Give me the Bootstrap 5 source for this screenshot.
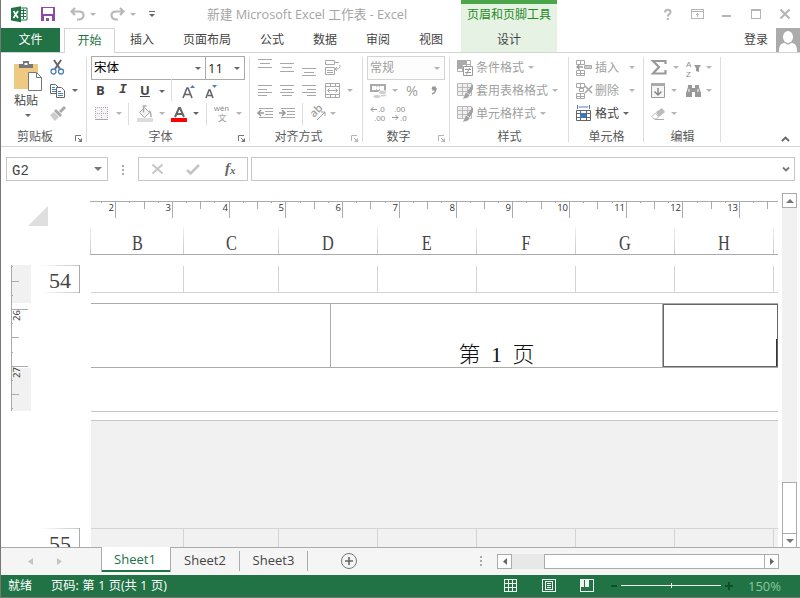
<!DOCTYPE html>
<html lang="zh-CN">
<head>
<meta charset="utf-8">
<title>新建 Microsoft Excel 工作表 - Excel</title>
<link rel="stylesheet" href="https://cdn.jsdelivr.net/npm/bootstrap@5.3.0/dist/css/bootstrap.min.css">
<style>
body{font-family:"Open Sans","Noto Sans CJK SC",sans-serif;font-size:12px;line-height:16px;color:#444;overflow:hidden;background:#fff}
svg{display:block;flex:none;overflow:visible;fill:none}
.crisp{shape-rendering:crispEdges}
.win{width:800px;height:598px;border-left:1px solid #777;border-bottom:1px solid #777}
/* header */
.top{height:53px}
.top-left{width:460px}.top-ctx{width:96px;height:52px;background:#e6f2e4;border-top:4px solid #4ba64b}
.top-right{width:243px}
.bar1{height:28px}.bar2{height:25px;border-bottom:1px solid #d4d4d4}
.top-ctx-wrap{border-bottom:1px solid #d4d4d4;height:53px}
.qat{display:grid;grid-template-columns:30px 29px 20px 20px 20px 19px 58px auto;padding-left:10px;align-items:center}
.doc{font-size:12.7px;color:#a5a5a5;white-space:nowrap}
.ctx-title{color:#1e8c1e;height:22px;line-height:22px}
.ctx-tab{height:26px;line-height:27px}
.tab-file{width:59px;height:24px;background:#217346;color:#fff;line-height:24px;margin-right:4px}
.tab-on{width:51px;height:25px;background:#fff;border:1px solid #d4d4d4;border-bottom:0;color:#217346;line-height:23px}
.tabs2{display:grid;grid-template-columns:53px 77px 53px 53px 53px 30px;padding-left:15px;line-height:24px}
.wbtns{display:grid;grid-template-columns:27px 31px 29px 29px 12px;padding-left:107px;align-items:center}
/* ribbon */
.ribbon{height:94px;border-bottom:1px solid #d4d4d4;padding-top:3px}
.grp{position:relative;height:88px;flex:none}
.grp::after{content:"";position:absolute;right:0;top:1px;height:85px;border-right:1px solid #dcdcdc}
.rr{display:grid;height:23px;align-items:center;white-space:nowrap}
.lab{height:22px;line-height:24px;text-align:center;color:#5a5a5a}
.launch{position:absolute;right:5px;bottom:2px;color:#777}
.dim{color:#a0a0a0}
.launch.dim{color:#b5b5b5}
.vs{width:1px;height:22px;background:#dcdcdc}
.box{border:1px solid #ababab;height:24px;line-height:22px;background:#fff;padding:0 4px 0 2px}
.box-dim{border-color:#d4d4d4;background:#fdfdfd;color:#a0a0a0}
.g-clip{width:86px}.g-font{width:163px}.g-align{width:113px}.g-num{width:87px}.g-sty{width:119px}.g-cell{width:75px}.g-edit{width:77px}
.g-clip .lab{padding-right:18px}
.paste{width:49px;padding:5px 0 0 13px;height:66px}
.paste-t{line-height:15px;padding-top:2px}
.paste svg.cr{margin:6px 0 0 11px}
.c2{grid-template-columns:22px 6px}
.f1{width:115px;font-size:12.500px;color:#000}.f2{width:40px;margin-left:-1px;font-size:13px;color:#222}
.f-b{grid-template-columns:23px 21px 19px 12px 11px 23px 12px;padding:0 0 2px 9px;font-size:13px}
.f-b svg{margin-top:2px}
.f-c{grid-template-columns:21px 12px 9px 22px 12px 22px 13px 8px 22px 6px;padding-left:8px}
.a-a{grid-template-columns:22px 22px 23px 22px 6px;padding-left:8px}
.a-c{grid-template-columns:22px 23px 8px 20px 6px;padding-left:7px}
.n-a{width:78px;margin-left:4px}
.n-b{grid-template-columns:22px 14px 25px 6px;padding-left:7px;font-size:14.500px}
.n-c{grid-template-columns:21px 16px;padding-left:8px}
.s-r{grid-template-columns:19px auto 6px;padding-left:7px;justify-content:start}
.s-r .cr{margin-left:4px}
.g-cell .wide .cr{margin-left:10px}
.e-a{grid-template-columns:22px 13px 20px 6px;padding-left:7px}
.e-b{grid-template-columns:20px 15px 20px 6px;padding-left:7px}
.ribbon-end{width:79px;padding:80px 0 0 60px}
.tiny{font:8px "Liberation Sans",sans-serif;fill:#8c8c8c}
/* formula bar */
.fbar{height:43px;padding:10px 0 0 5px}
.fb{height:24px;border:1px solid #c6c6c6}
.namebox{width:102px;padding:0 5px 0 5px;font-family:"Liberation Mono",monospace;font-size:14px}
.fxbox{width:110px;display:grid;grid-template-columns:34px 37px 14px;padding-left:13px;align-items:center;margin-right:3px}
.inbox{width:544px;padding-right:4px}
.dots{margin:0 14px 0 14px}
/* sheet */
.area{height:357px}
.gutter{width:89px}.gut-top{height:75px;padding:16px 0 0 27px}
.gut-mid{height:263px}
.vruler{margin-left:10px}
.rh{width:40px;height:28px;border-right:1px solid #ababab;background:linear-gradient(90deg,#fff,#c6c6c6) top/100% 1px no-repeat,linear-gradient(90deg,#fff,#c6c6c6) bottom/100% 1px no-repeat;font:22px/31px "Liberation Serif",serif;text-align:right;padding-right:8px;margin-left:6px;flex:none}
.rh.cut{margin-left:39px;height:19px;background-size:100% 1px,0 0;overflow:hidden}
.grid-w{width:688px;padding-top:11px}
.rlr{height:26px}
.rlr text,.vruler text{font:9.500px "Open Sans",sans-serif;fill:#333}
.cols{height:28px;border-bottom:1px solid #ababab}
.colh{flex:none;font:22px/32px "Liberation Serif",serif;text-align:center;border-left:1px solid;border-image:linear-gradient(#f2f2f2,#c6c6c6) 1}
.colh span{display:inline-block;transform:scaleX(.74)}
.cells{height:27px;margin:11px 0 0 1px;border-bottom:1px solid #d4d4d4}
.cells i{flex:none;border-right:1px solid #d4d4d4}
.w93{width:93px}.w95{width:95px}.w99{width:99px}.w4{width:4px}
.foot{height:65px;margin:10px 0 0 1px;border:1px solid #ababab;border-width:1px 0}
.foot-l{width:240px;border-right:1px solid #ababab}
.foot-c{width:332px;border-right:1px solid #ababab;font:300 22px/25px "Liberation Serif","Noto Sans CJK SC",serif;color:#111;white-space:pre;word-spacing:5px}
.foot-r{width:115px;border:1px solid #666}
.foot-r b{width:1px;height:27px;background:#333}
.gap1{height:44px;border-bottom:1px solid #c6c6c6;margin-left:1px}
.nextp{height:127px;margin:8px 0 0 1px;border-top:1px solid #c6c6c6;background:#f1f1f1}
.nextp .cells{border-bottom:0;border-top:1px solid #d4d4d4;height:19px;margin:107px 0 0}
.vsb{width:15px;margin:3px 0 0 4px;background:#f1f1f1;height:355px}
.sb{width:15px;height:15px;border:1px solid #ababab;background:#fff;flex:none}
.vthumb{height:52px;margin-bottom:-1px;border:1px solid #ababab;background:#fff}
/* bottom */
.strip{height:28px;background:#f5f5f5;border-top:1px solid #ababab;font-size:13px}
.nav-arr{width:100px;height:27px;padding:0 39px 0 27px}
.st{height:20px;line-height:18px;text-align:center;margin-top:3px;border-right:1px solid #ababab;width:69px}
.st + .st + .st{width:68px}
.st-on{width:70px;height:25px;margin:-1px 0 0;background:#fff;border:1px solid #ababab;border-width:0 1px;box-shadow:inset 0 -2px #217346;color:#217346;line-height:25px;padding-right:2px}
.plus{margin:5px 0 0 33px}
.hdots{margin:8px 15px 0 auto}
.hsb{width:282px;height:15px;margin:6px 21px 0 0;background:#e8e8e8}
.hthumb{width:221px;height:15px;border:1px solid #ababab;background:#fff;margin-left:auto;margin-right:-1px}
.status{height:22px;background:#217346;color:#fff;line-height:22px;padding-left:7px}
.pages{margin-left:19px;font-size:12.300px;word-spacing:.3px}
.stat-ic{display:grid;grid-template-columns:38px 38px 31px 137px auto;padding-top:4px;height:22px;margin-left:auto;width:296px;line-height:14px}
.zoomv{color:#8cc79c;font-size:13px}
</style>
<script src="https://cdn.jsdelivr.net/npm/bootstrap@5.3.0/dist/js/bootstrap.bundle.min.js"></script>
</head>
<body>
<svg width="0" height="0" class="position-absolute">
<symbol id="cr" viewBox="0 0 6 3"><path d="M0 0h6L3 3z" fill="#666"/></symbol>
<symbol id="cd" viewBox="0 0 6 3"><path d="M0 0h6L3 3z" fill="#b5b5b5"/></symbol>
<symbol id="la" viewBox="0 0 7 7"><path d="M.5 6V.5H6M3 3l3 3" stroke="currentColor"/><path d="M7 3v4H3z" fill="currentColor"/></symbol>
<symbol id="tbl" viewBox="0 0 16 16"><path fill="#f1edf1" d="M1 1h13v12H1z"/><path d="M.5.5h14v12H.5zM.5 4.500h14M.5 8.500h14M5.500 .5v12M10.500 .5v12" stroke="#b8b8b8"/><path d="M16 1v5l-4 6-3-2z" fill="#a0a0a0"/><path d="M9 9l4 3c-1 3-4 4-8 4 2-1 2-5 4-7z" fill="#a0a0a0" stroke="#fff" stroke-width=".7"/></symbol>
</svg>
<div class="win d-flex flex-column">
<header class="top d-flex flex-shrink-0">
 <div class="top-left">
  <div class="bar1 qat">
   <svg width="17" height="17"><path d="M9 2h7v12H9z" fill="#fff" stroke="#217346"/><path d="M10 4.500h5M10 7.500h5M10 10.500h5M12.500 3v10" stroke="#217346"/><path d="M0 2L10 .3v16L0 14.500z" fill="#217346"/><path d="M2.500 5l4.500 7M7 5l-4.500 7" stroke="#fff" stroke-width="1.700"/></svg>
   <svg width="14" height="14" class="crisp"><path d="M0 0h14v14H0z" fill="#8b4da5"/><path d="M2 1h10v6H2zM3 9h8v5H3z" fill="#fff"/><path d="M5 11h3v3H5z" fill="#8b4da5"/></svg>
   <svg width="15" height="14"><path d="M5 1L1.500 4.500 5 8M2 4.500h7c6 0 6 7 0 8H7" stroke="#b9b9b9" stroke-width="2.200"/></svg>
   <svg width="6" height="3"><use href="#cd"/></svg>
   <svg width="15" height="14"><path d="M10 1l3.500 3.500L10 8M13 4.500H6c-6 0-6 7 0 8h2" stroke="#b9b9b9" stroke-width="2.200"/></svg>
   <svg width="6" height="3"><use href="#cd"/></svg>
   <svg width="6" height="6"><path d="M0 .5h6" stroke="#666"/><path d="M0 3h6L3 6z" fill="#666"/></svg>
   <span class="doc">新建 Microsoft Excel 工作表 - Excel</span>
  </div>
  <nav class="bar2 d-flex"><div class="tab-file text-center">文件</div><div class="tab-on text-center">开始</div>
   <div class="tabs2"><span>插入</span><span>页面布局</span><span>公式</span><span>数据</span><span>审阅</span><span>视图</span></div></nav>
 </div>
 <div class="top-ctx-wrap"><div class="top-ctx text-center"><div class="ctx-title">页眉和页脚工具</div><div class="ctx-tab">设计</div></div></div>
 <div class="top-right">
  <div class="bar1 wbtns">
   <svg width="8" height="11"><path d="M1 3.500c0-3.500 5.500-3.500 5.500-.5 0 2-2.700 2-2.700 4.500M3.800 9v2" stroke="#b5b5b5" stroke-width="2"/></svg>
   <svg width="13" height="10" class="crisp"><path d="M.5.5h12v9H.5zM.5 2.500h12M6.500 4v4M5 5.500h3" stroke="#b5b5b5"/></svg>
   <svg width="9" height="10" class="crisp"><path d="M0 7h9" stroke="#b5b5b5" stroke-width="2"/></svg>
   <svg width="10" height="10" class="crisp"><path d="M.5.5h9v9H.5zM0 1.500h10" stroke="#b5b5b5"/></svg>
   <svg width="10" height="10"><path d="M.5.5l9 9M9.500.5l-9 9" stroke="#b5b5b5" stroke-width="2"/></svg>
  </div>
  <div class="bar2 d-flex justify-content-end"><span class="me-2 pt-1">登录</span>
   <svg width="24" height="24"><path d="M0 0h24v24H0z" fill="#ababab"/><ellipse cx="12" cy="9" rx="5" ry="6" fill="#fff"/><path d="M3 24c0-7 2-9 6-9 2 2 4 2 6 0 4 0 6 2 6 9z" fill="#fff"/></svg></div>
 </div>
</header>

<section class="ribbon d-flex flex-shrink-0">
 <div class="grp g-clip">
  <div class="d-flex"><div class="paste">
    <svg width="28" height="30"><path d="M0 3h24v25H0z" fill="#edc981"/><path d="M5 3h4V0h6v3h4v4H5z" fill="#777"/><path d="M10.500 2h3v2h-3z" fill="#fff"/><path d="M14.500 11.500h8l5 5v13h-13z" fill="#fff" stroke="#777"/><path d="M22.500 12v4.500h5" stroke="#777"/></svg>
    <div class="paste-t">粘贴</div><svg class="cr" width="6" height="3"><use href="#cr"/></svg></div>
   <div>
    <div class="rr c2"><svg width="15" height="15"><path d="M4 0l6 9M11 0L5 9" stroke="#666" stroke-width="2"/><circle cx="3.500" cy="11.500" r="2.500" stroke="#4a80b8" stroke-width="1.300"/><circle cx="11" cy="11.500" r="2.500" stroke="#4a80b8" stroke-width="1.300"/></svg></div>
    <div class="rr c2"><svg width="15" height="14"><path d="M.5.5h5l3 3v6h-8z" fill="#fff" stroke="#666"/><path d="M2 3.500h3M2 5.500h4M2 7.500h4" stroke="#4a80b8"/><path d="M6.500 3.500h5l3 3v7h-8z" fill="#fff" stroke="#666"/><path d="M8 7.500h3M8 9.500h5M8 11.500h5" stroke="#4a80b8"/></svg><svg width="6" height="3"><use href="#cr"/></svg></div>
    <div class="rr c2"><svg width="16" height="15"><path d="M15 1l-5 5" stroke="#aaa" stroke-width="3"/><path d="M6 3l6 6-2 2-6-6z" fill="#aaa"/><path d="M4 6l5 5-4 4-5-6z" fill="#ccc"/></svg></div>
   </div></div>
  <div class="lab">剪贴板</div><svg class="launch" width="7" height="7"><use href="#la"/></svg>
 </div>
 <div class="grp g-font">
  <div class="rr"><div class="d-flex ps-1"><div class="box f1 d-flex align-items-center justify-content-between"><span>宋体</span><svg width="6" height="3"><use href="#cr"/></svg></div><div class="box f2 d-flex align-items-center justify-content-between"><span>11</span><svg width="6" height="3"><use href="#cr"/></svg></div></div></div>
  <div class="rr f-b"><b>B</b><b class="fst-italic font-monospace">I</b><b class="text-decoration-underline">U</b><svg width="6" height="3"><use href="#cr"/></svg><i class="vs"></i>
   <svg width="14" height="15"><path d="M1 14L5 4h1l4 10M3 10.500h5" stroke="#666" stroke-width="1.600"/><path d="M8 4l2.500-3L13 4z" fill="#4a80b8"/></svg>
   <svg width="12" height="15"><path d="M1 14l3-8h1l3 8M3 11.500h4" stroke="#666" stroke-width="1.600"/><path d="M7 1h5L9.500 4z" fill="#4a80b8"/></svg></div>
  <div class="rr f-c"><svg width="13" height="13" class="crisp"><path fill="#f7f2f7" d="M0 0h13v12H0z"/><path d="M0 .5h13M0 6.500h13M.5 0v12M6.500 0v12M12.500 0v12" stroke="#b0a8b0" stroke-dasharray="1 1"/><path d="M0 12.500h13" stroke="#aaa"/></svg><svg width="6" height="3"><use href="#cd"/></svg><i class="vs"></i>
   <svg width="16" height="16"><path d="M0 12h16v4H0z" fill="#ddd"/><path d="M2.500 6.500l5-5 5 5-5 5z" stroke="#aaa" fill="#f7f2f7"/><path d="M6.500 6.500V0h3M12 5c2 1 2 4 2 6" stroke="#aaa" stroke-width="1.500"/></svg><svg width="6" height="3"><use href="#cd"/></svg>
   <svg width="16" height="16"><path d="M4 11l4-9h1l4 9M5.500 8h6" stroke="#666" stroke-width="2"/><path d="M0 12h16v4H0z" fill="#f00"/></svg><svg width="6" height="3"><use href="#cr"/></svg><i class="vs"></i>
   <svg width="16" height="17"><text class="tiny" x="0" y="6" textLength="15">wén</text><text x="4" y="16" font-size="8.500" fill="#909090">文</text></svg><svg width="6" height="3"><use href="#cd"/></svg></div>
  <div class="lab pe-3">字体</div><svg class="launch" width="7" height="7"><use href="#la"/></svg>
 </div>
 <div class="grp g-align">
  <div class="rr a-a">
   <svg width="14" height="15"><path d="M0 -.5h14M2 3.500h10M0 7.500h14" stroke="#a8a8a8"/></svg>
   <svg width="14" height="15"><path d="M0 3.500h14M2 7.500h10M0 11.500h14" stroke="#a8a8a8"/></svg>
   <svg width="14" height="15"><path d="M0 8.500h14M2 12.500h10M0 15.500h14" stroke="#a8a8a8"/></svg>
   <svg width="16" height="15"><path d="M.5.5h9v4h-9zM.5 7.500h9v7h-9zM2 10.500h6M2 12.500h6M10 2.500h4M15 5c0 4-2 4-5 4M12 7l-2 2 2 2" stroke="#a8a8a8"/></svg></div>
  <div class="rr a-a">
   <svg width="14" height="11"><path d="M0 .5h14M0 4.500h9M0 7.500h14M0 10.500h9" stroke="#a8a8a8"/></svg>
   <svg width="14" height="11"><path d="M0 .5h14M2 4.500h10M0 7.500h14M2 10.500h10" stroke="#a8a8a8"/></svg>
   <svg width="14" height="11"><path d="M0 .5h14M5 4.500h9M0 7.500h14M5 10.500h9" stroke="#a8a8a8"/></svg>
   <svg width="15" height="15"><path d="M.5.5h14v14H.5zM0 3.500h15M0 11.500h15M5.500 0v3M10.500 0v3M5.500 12v3M10.500 12v3M2.500 7.500h10M4.500 5.500l-2 2 2 2M10.500 5.500l2 2-2 2" stroke="#a8a8a8"/></svg><svg width="6" height="3"><use href="#cd"/></svg></div>
  <div class="rr a-c">
   <svg width="16" height="11"><path d="M2 .5h14M8 3.500h8M8 6.500h8M2 9.500h14" stroke="#a8a8a8"/><path d="M7 5H1M4 2L1 5l3 3" stroke="#999" stroke-width="1.500"/></svg>
   <svg width="16" height="11"><path d="M2 .5h14M8 3.500h8M8 6.500h8M2 9.500h14" stroke="#a8a8a8"/><path d="M0 5h6M3 2l3 3-3 3" stroke="#999" stroke-width="1.500"/></svg><i class="vs"></i>
   <svg width="16" height="15"><text transform="translate(4 12) rotate(-45)" font-size="11" font-weight="600" fill="#a0a0a0">ab</text><path d="M7 14l8-8M11 6h4v4" stroke="#a0a0a0"/></svg><svg width="6" height="3"><use href="#cd"/></svg></div>
  <div class="lab pe-3">对齐方式</div><svg class="launch dim" width="7" height="7"><use href="#la"/></svg>
 </div>
 <div class="grp g-num">
  <div class="rr"><div class="box box-dim n-a d-flex align-items-center justify-content-between"><span>常规</span><svg width="6" height="3"><use href="#cd"/></svg></div></div>
  <div class="rr n-b dim"><svg width="17" height="16"><path d="M0 1h16v8H0z" fill="#aaa"/><path d="M2 3h4v4H2zM10 3h4v4h-4z" fill="#fff"/><circle cx="8" cy="5" r="2" fill="#fff"/><g fill="#ccc" stroke="#fff"><ellipse cx="12.500" cy="12" rx="4" ry="2"/><ellipse cx="12.500" cy="9.500" rx="4" ry="2"/><ellipse cx="7" cy="13.500" rx="4" ry="2"/></g></svg><svg width="6" height="3"><use href="#cd"/></svg><span>%</span><svg width="6" height="10"><circle cx="3" cy="2.500" r="2.300" fill="#999"/><path d="M5 2c0 3-1 5-4 6" stroke="#999" stroke-width="1.400"/></svg></div>
  <div class="rr n-c"><svg width="15" height="15"><path d="M0 3.500h6M2.500 1L0 3.500 2.500 6" stroke="#999"/><text class="tiny" x="7" y="6">.0</text><text class="tiny" x="3" y="15">.00</text></svg><svg width="16" height="15"><text class="tiny" x="2" y="6">.00</text><path d="M0 11.500h6M3.500 9L6 11.500 3.500 14" stroke="#999"/><text class="tiny" x="8" y="15">.0</text></svg></div>
  <div class="lab pe-3">数字</div><svg class="launch dim" width="7" height="7"><use href="#la"/></svg>
 </div>
 <div class="grp g-sty dim">
  <div class="rr s-r"><svg width="16" height="16"><path d="M.5.5h13v11H.5zM0 4.500h14M0 8.500h14M5.500 0v12M9.500 0v12" stroke="#b0b0b0"/><path d="M0 0h9v4H0zM0 4h5v4H0z" fill="#aaa"/><path d="M6.500 6.500h9v9h-9z" fill="#fff" stroke="#999"/><path d="M8 9.500h6M8 12.500h6M12.500 8l-3 6.500" stroke="#999"/></svg><span>条件格式</span><svg class="cr" width="6" height="3"><use href="#cd"/></svg></div>
  <div class="rr s-r"><svg width="16" height="16"><use href="#tbl"/></svg><span>套用表格格式</span><svg class="cr" width="6" height="3"><use href="#cd"/></svg></div>
  <div class="rr s-r"><svg width="16" height="16"><use href="#tbl"/></svg><span>单元格样式</span><svg class="cr" width="6" height="3"><use href="#cd"/></svg></div>
  <div class="lab">样式</div>
 </div>
 <div class="grp g-cell">
  <div class="rr s-r wide dim"><svg width="16" height="16"><path d="M.5.5h8v4h-8zM4.500 0v4M.5 10.500h8v5h-8zM4.500 10v6M0 13.500h8" stroke="#a8a8a8"/><path d="M8.500 5.500h7v3h-7z" fill="#ccc" stroke="#a8a8a8"/><path d="M7 7H1M3.500 4.500L1 7l2.500 2.500" stroke="#999" stroke-width="1.300"/></svg><span>插入</span><svg class="cr" width="6" height="3"><use href="#cd"/></svg></div>
  <div class="rr s-r wide dim"><svg width="16" height="16"><path d="M.5.5h8v4h-8zM4.500 0v4M.5 10.500h8v5h-8zM4.500 10v6M0 13.500h8M3.500 5.500h4v3h-4z" stroke="#a8a8a8"/><path d="M9 3l7 7M16 3l-7 7" stroke="#a8a8a8" stroke-width="1.600"/></svg><span>删除</span><svg class="cr" width="6" height="3"><use href="#cd"/></svg></div>
  <div class="rr s-r"><svg width="16" height="16"><path d="M1.500 -1v4M13.500 -1v4M3 1h9" stroke="#4a80b8"/><path d="M.5 4.500h14v10H.5zM0 7.500h15M0 11.500h15M4.500 4v11M10.500 4v11" stroke="#666"/><path d="M4 7h6v5H4z" fill="#3a78c0"/></svg><span>格式</span><svg class="cr" width="6" height="3"><use href="#cr"/></svg></div>
  <div class="lab">单元格</div>
 </div>
 <div class="grp g-edit">
  <div class="rr e-a"><svg width="16" height="15"><path d="M14.500 4V1H2l6 6-6 6.500h12.500V10" stroke="#999" stroke-width="2.200"/></svg><svg width="6" height="3"><use href="#cd"/></svg><svg width="17" height="16"><text class="tiny" x="0" y="7">A</text><text class="tiny" x="0" y="17">Z</text><path d="M8 5h7l-2 3v4l-3-1V8z" fill="#999"/></svg><svg width="6" height="3"><use href="#cd"/></svg></div>
  <div class="rr e-b"><svg width="15" height="15"><path d="M.5 1.500h13v13H.5z" stroke="#999" fill="#f7f4f7"/><path d="M0 0h14v3H0z" fill="#aaa"/><path d="M7 5v7M3.500 8.500L7 12l3.500-3.500" stroke="#888" stroke-width="1.500"/></svg><svg width="6" height="3"><use href="#cd"/></svg><svg width="15" height="13"><path d="M2 3V1h4v3h3V1h4v2l2 6v4H9V8H6v5H0V9z" fill="#999"/><path d="M3 5v3M12 5v3" stroke="#fff"/></svg><svg width="6" height="3"><use href="#cd"/></svg></div>
  <div class="rr e-b"><svg width="15" height="12"><path d="M5 4l6-4 3 4-6 5z" fill="#bbb"/><path d="M4.500 5l3 4-2 2H3L1 8.500z" stroke="#bbb" fill="#fff"/><path d="M4 11.500h9" stroke="#aaa"/></svg><svg width="6" height="3"><use href="#cd"/></svg></div>
  <div class="lab">编辑</div>
 </div>
 <div class="ribbon-end"><svg width="9" height="6"><path d="M1 5l3.500-3.500L8 5" stroke="#666" stroke-width="1.800"/></svg></div>
</section>

<section class="fbar d-flex flex-shrink-0">
 <div class="fb namebox d-flex align-items-center justify-content-between"><span class="pt-1">G2</span><svg width="8" height="4"><path d="M0 0h8L4 4z" fill="#777"/></svg></div>
 <svg class="dots crisp mt-2" width="2" height="11"><path d="M0 0h2v2H0zM0 4h2v2H0zM0 8h2v2H0z" fill="#aaa"/></svg>
 <div class="fb fxbox"><svg width="11" height="10"><path d="M.5.5l10 9M10.500.5l-10 9" stroke="#c4c4c4" stroke-width="1.800"/></svg><svg width="14" height="11"><path d="M1 6l3.500 3.500L13 1" stroke="#c4c4c4" stroke-width="2.600"/></svg><svg width="14" height="14"><text x="2" y="11" font-family="Liberation Serif" font-style="italic" font-weight="700" font-size="15" fill="#666">f</text><text x="7" y="12" font-family="Liberation Serif" font-style="italic" font-weight="700" font-size="11" fill="#666">x</text></svg></div>
 <div class="fb inbox d-flex align-items-center justify-content-end"><svg width="8" height="5"><path d="M1 .5L4 3.500 7 .5" stroke="#777" stroke-width="1.800"/></svg></div>
</section>

<main class="area d-flex flex-shrink-0">
 <div class="gutter">
  <div class="gut-top"><svg width="20" height="20"><path d="M20 0v20H0z" fill="#dfdfdf"/></svg></div>
  <div class="gut-mid d-flex"><svg class="vruler" id="vruler" width="23" height="146"></svg><div class="rh">54</div></div>
  <div class="rh cut">55</div>
 </div>
 <div class="grid-w">
  <svg class="rlr" id="hruler" width="688" height="26"></svg>
  <div class="cols d-flex"><div class="colh w93"><span>B</span></div><div class="colh w95"><span>C</span></div><div class="colh w99"><span>D</span></div><div class="colh w99"><span>E</span></div><div class="colh w99"><span>F</span></div><div class="colh w99"><span>G</span></div><div class="colh w99"><span>H</span></div><div class="colh w4"></div></div>
  <div class="cells d-flex"><i class="w93"></i><i class="w95"></i><i class="w99"></i><i class="w99"></i><i class="w99"></i><i class="w99"></i><i class="w99"></i></div>
  <div class="foot d-flex"><div class="foot-l"></div><div class="foot-c d-flex align-items-end justify-content-center">第 1 页</div><div class="foot-r d-flex justify-content-end align-items-end"><b></b></div></div>
  <div class="gap1"></div>
  <div class="nextp d-flow-root overflow-hidden"><div class="cells d-flex"><i class="w93"></i><i class="w95"></i><i class="w99"></i><i class="w99"></i><i class="w99"></i><i class="w99"></i><i class="w99"></i></div></div>
 </div>
 <div class="vsb d-flex flex-column"><div class="sb d-flex align-items-center justify-content-center"><svg width="8" height="4"><path d="M0 4h8L4 0z" fill="#777"/></svg></div><div class="vthumb mt-auto"></div><div class="sb d-flex align-items-center justify-content-center"><svg width="8" height="4"><path d="M0 0h8L4 4z" fill="#777"/></svg></div></div>
</main>

<section class="strip d-flex flex-shrink-0">
 <div class="nav-arr d-flex align-items-center justify-content-between"><svg width="5" height="7"><path d="M5 0v7L0 3.500z" fill="#c4c4c4"/></svg><svg width="5" height="7"><path d="M0 0v7l5-3.500z" fill="#c4c4c4"/></svg></div>
 <div class="st st-on">Sheet1</div><div class="st">Sheet2</div><div class="st">Sheet3</div>
 <svg class="plus" width="16" height="16"><circle cx="8" cy="8" r="7.500" stroke="#777"/><path d="M8 4v8M4 8h8" stroke="#666" stroke-width="1.600"/></svg>
 <svg class="hdots crisp" width="2" height="11"><path d="M0 0h2v2H0zM0 4h2v2H0zM0 8h2v2H0z" fill="#aaa"/></svg>
 <div class="hsb d-flex"><div class="sb d-flex align-items-center justify-content-center"><svg width="4" height="7"><path d="M4 0v7L0 3.500z" fill="#666"/></svg></div><div class="hthumb"></div><div class="sb d-flex align-items-center justify-content-center"><svg width="4" height="7"><path d="M0 0v7l4-3.500z" fill="#666"/></svg></div></div>
</section>
<footer class="status d-flex flex-shrink-0">
 <span>就绪</span><span class="pages">页码: 第 1 页(共 1 页)</span>
 <div class="stat-ic">
  <svg class="crisp" width="13" height="13"><path d="M.5.5h12v12H.5zM.5 4.500h12M.5 8.500h12M4.500 0v13M8.500 0v13" stroke="#f0f0f0"/></svg>
  <svg class="crisp" width="14" height="13"><path d="M.5.5h13v12H.5zM3.500 2.500h7v8h-7zM5 4.500h4M5 6.500h4M5 8.500h4" stroke="#f0f0f0"/></svg>
  <svg class="crisp" width="14" height="13"><path d="M.5.5h13v12H.5z" stroke="#f0f0f0"/><path d="M0 0h4v8H0zM5 0h4v8H5z" fill="#f0f0f0"/></svg>
  <svg class="crisp" width="123" height="13"><path d="M0 7h6M114 7h8M118 3v8" stroke="#0d5028" stroke-width="2"/><path d="M10 6.500h100M60.500 4v5" stroke="#f0f0f0"/></svg>
  <span class="zoomv">150%</span>
 </div>
</footer>
</div>
<script>
// Rulers: one long tick per centimetre, with half and quarter ticks between.
const cm = 56.72;
let h = 'M0 .5H688';
let labels = '';
for (let i = 1; i < 14; i++) {
  const x = 25.7 + (i - 2) * cm;
  [[0, 17], [.25, 2], [.5, 8], [.75, 2]].forEach(([f, len]) => {
    const p = Math.floor(x + f * cm) + .5;
    if (p > 0 && p < 688) h += `M${p} 0v${len}`;
  });
  if (i > 1) labels += `<text x="${Math.floor(x) - 1}" y="10" text-anchor="end">${i}</text>`;
}
document.getElementById('hruler').innerHTML = `<path d="${h}" stroke="#ababab"/>` + labels;
let v = 'M.5 0V146';
[[1,1],[16,7],[30,1],[44,16],[58,1],[72,7],[87,1],[101,16],[115,1],[129,7],[143,1]].forEach(([y, len]) => v += `M1 ${y}.5h${len}`);
document.getElementById('vruler').innerHTML = '<path fill="#f1f1f1" d="M1 0h19v38H1zM1 103h19v43H1z"/>' +
  `<path d="${v}" stroke="#ababab"/>` +
  '<text transform="translate(9 56) rotate(-90)">26</text><text transform="translate(9 113) rotate(-90)">27</text>';
</script>
</body>
</html>
